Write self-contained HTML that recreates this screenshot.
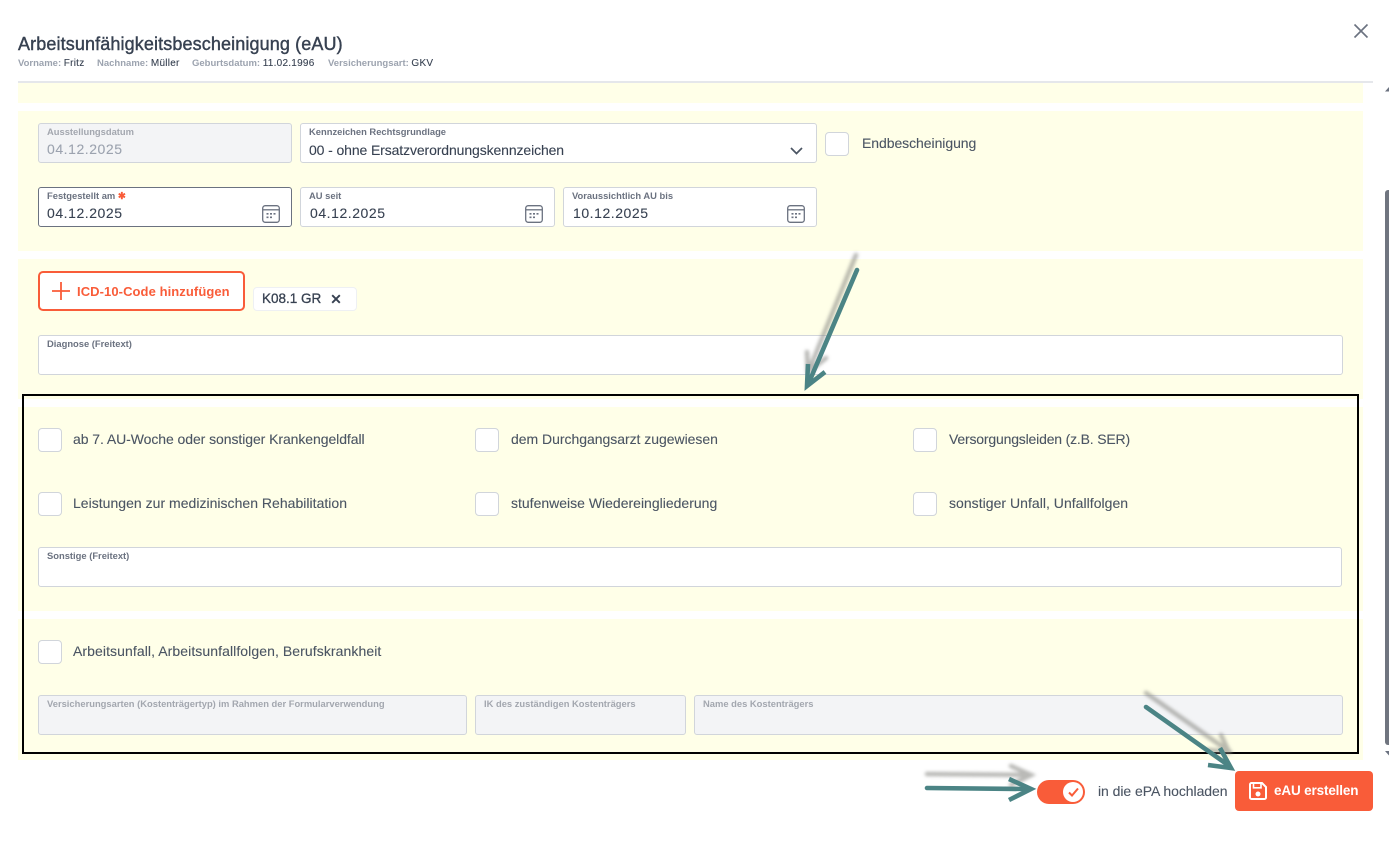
<!DOCTYPE html>
<html lang="de"><head><meta charset="utf-8"><title>eAU</title>
<style>
*{box-sizing:border-box}
html,body{margin:0;padding:0;width:1389px;height:841px;overflow:hidden;background:#fff}
body{position:relative;font-family:"Liberation Sans",sans-serif;color:#374151}
.a{position:absolute;white-space:nowrap}
.p{position:absolute;left:18px;width:1345px;background:#ffffe8}
.f{position:absolute;height:40px;background:#fff;border:1px solid #d1d5db;border-radius:3px}
.f.d{background:#f3f4f6}
.f.k{border-color:#6b7280}
.l{position:absolute;left:8px;top:2px;font-size:9.4px;font-weight:700;color:#6b7280;white-space:nowrap;line-height:11px}
.d .l{color:#a3a7af}
.v{position:absolute;left:8px;top:16px;font-size:14px;line-height:18px;color:#374151;letter-spacing:.55px;white-space:nowrap;-webkit-text-stroke:.1px currentColor}
.c{position:absolute;width:24px;height:24px;background:#fff;border:1px solid #d1d5db;border-radius:4px}
.t{position:absolute;font-size:14px;line-height:18px;color:#4b5563;white-space:nowrap;-webkit-text-stroke:.1px currentColor}
.cal{position:absolute;left:223px;top:17px}
.h{position:absolute;top:58px;font-size:9.5px;line-height:12px;font-weight:700;color:#9ca3af;white-space:nowrap}
.h span{color:#374151;font-weight:400;font-size:10px;letter-spacing:.25px;-webkit-text-stroke:.1px #374151}
</style></head><body>
<svg class="a" style="left:1353px;top:23px" width="16" height="16" viewBox="0 0 16 16"><path d="M1.5 1.5L14.5 14.5M14.5 1.5L1.5 14.5" stroke="#6b7280" stroke-width="1.6" fill="none"/></svg>
<div class="a" style="left:18px;top:33px;font-size:18px;line-height:22px;color:#374151;-webkit-text-stroke:.4px #374151;letter-spacing:.12px">Arbeitsunfähigkeitsbescheinigung (eAU)</div>
<div class="h" style="left:18px">Vorname: <span>Fritz</span></div>
<div class="h" style="left:97px">Nachname: <span>Müller</span></div>
<div class="h" style="left:192px">Geburtsdatum: <span>11.02.1996</span></div>
<div class="h" style="left:328px">Versicherungsart: <span>GKV</span></div>
<div class="a" style="left:18px;top:81px;width:1355px;height:2px;background:#e5e7eb"></div>

<div class="p" style="top:83px;height:20px"></div>
<div class="p" style="top:111px;height:140px"></div>
<div class="p" style="top:259px;height:140px"></div>
<div class="p" style="top:407px;height:204px"></div>
<div class="p" style="top:619px;height:141px"></div>

<div class="f d" style="left:38px;top:123px;width:254px"><div class="l">Ausstellungsdatum</div><div class="v" style="color:#9ca3af">04.12.2025</div></div>
<div class="f" style="left:300px;top:123px;width:517px"><div class="l">Kennzeichen Rechtsgrundlage</div><div class="v" style="top:17px;letter-spacing:-.11px">00 - ohne Ersatzverordnungskennzeichen</div>
<svg class="a" style="left:488px;top:22px" width="15" height="10" viewBox="0 0 15 10"><path d="M2 2L7.5 7.5L13 2" stroke="#4b5563" stroke-width="1.7" fill="none"/></svg></div>
<div class="c" style="left:825px;top:132px"></div>
<div class="t" style="left:862px;top:134px;letter-spacing:-.06px">Endbescheinigung</div>

<div class="f k" style="left:38px;top:187px;width:254px"><div class="l">Festgestellt am <span style="color:#f95c39">✱</span></div><div class="v">04.12.2025</div>
<svg class="cal" width="18" height="18" viewBox="0 0 18 18"><rect x=".7" y=".7" width="16.6" height="16.6" rx="2.5" fill="none" stroke="#6b7280" stroke-width="1.3"/><path d="M1 4.8H17" stroke="#6b7280" stroke-width="1.3"/><path d="M4.5 8.8h2M8 8.8h2M11.5 8.8h2M4.5 12.3h2M8 12.3h2" stroke="#6b7280" stroke-width="1.7"/></svg></div>
<div class="f" style="left:300px;top:187px;width:255px"><div class="l">AU seit</div><div class="v" style="left:9px">04.12.2025</div>
<svg class="cal" style="left:224px" width="18" height="18" viewBox="0 0 18 18"><rect x=".7" y=".7" width="16.6" height="16.6" rx="2.5" fill="none" stroke="#6b7280" stroke-width="1.3"/><path d="M1 4.8H17" stroke="#6b7280" stroke-width="1.3"/><path d="M4.5 8.8h2M8 8.8h2M11.5 8.8h2M4.5 12.3h2M8 12.3h2" stroke="#6b7280" stroke-width="1.7"/></svg></div>
<div class="f" style="left:563px;top:187px;width:254px"><div class="l">Voraussichtlich AU bis</div><div class="v" style="left:9px">10.12.2025</div>
<svg class="cal" style="left:223px" width="18" height="18" viewBox="0 0 18 18"><rect x=".7" y=".7" width="16.6" height="16.6" rx="2.5" fill="none" stroke="#6b7280" stroke-width="1.3"/><path d="M1 4.8H17" stroke="#6b7280" stroke-width="1.3"/><path d="M4.5 8.8h2M8 8.8h2M11.5 8.8h2M4.5 12.3h2M8 12.3h2" stroke="#6b7280" stroke-width="1.7"/></svg></div>

<div class="a" style="left:38px;top:271px;width:207px;height:40px;background:#fff;border:2px solid #f95c39;border-radius:5px"></div>
<svg class="a" style="left:52px;top:282px" width="18" height="18" viewBox="0 0 18 18"><path d="M0 9H18M9 0V18" stroke="#f95c39" stroke-width="1.8"/></svg>
<div class="a" style="left:77px;top:283px;font-size:13px;line-height:18px;font-weight:700;color:#f95c39;letter-spacing:.08px">ICD-10-Code hinzufügen</div>
<div class="a" style="left:253px;top:287px;width:104px;height:24px;background:#fff;border:1px solid #eef0f3;border-radius:4px"></div>
<div class="a" style="left:262px;top:290px;font-size:13.5px;line-height:18px;color:#374151;-webkit-text-stroke:.3px #374151">K08.1 GR</div>
<svg class="a" style="left:331px;top:294px" width="10" height="10" viewBox="0 0 10 10"><path d="M1.2 1.2L8.8 8.8M8.8 1.2L1.2 8.8" stroke="#374151" stroke-width="1.9"/></svg>
<div class="f" style="left:38px;top:335px;width:1305px"><div class="l">Diagnose (Freitext)</div></div>

<div class="c" style="left:38px;top:428px"></div><div class="t" style="left:73px;top:430px;letter-spacing:-.07px">ab 7. AU-Woche oder sonstiger Krankengeldfall</div>
<div class="c" style="left:475px;top:428px"></div><div class="t" style="left:511px;top:430px;letter-spacing:-.03px">dem Durchgangsarzt zugewiesen</div>
<div class="c" style="left:913px;top:428px"></div><div class="t" style="left:949px;top:430px;letter-spacing:-.18px">Versorgungsleiden (z.B. SER)</div>
<div class="c" style="left:38px;top:492px"></div><div class="t" style="left:73px;top:494px;letter-spacing:.02px">Leistungen zur medizinischen Rehabilitation</div>
<div class="c" style="left:475px;top:492px"></div><div class="t" style="left:511px;top:494px">stufenweise Wiedereingliederung</div>
<div class="c" style="left:913px;top:492px"></div><div class="t" style="left:949px;top:494px;letter-spacing:.03px">sonstiger Unfall, Unfallfolgen</div>
<div class="f" style="left:38px;top:547px;width:1304px"><div class="l">Sonstige (Freitext)</div></div>

<div class="c" style="left:38px;top:640px"></div><div class="t" style="left:73px;top:642px;letter-spacing:.08px">Arbeitsunfall, Arbeitsunfallfolgen, Berufskrankheit</div>
<div class="f d" style="left:38px;top:695px;width:429px"><div class="l">Versicherungsarten (Kostenträgertyp) im Rahmen der Formularverwendung</div></div>
<div class="f d" style="left:475px;top:695px;width:211px"><div class="l">IK des zuständigen Kostenträgers</div></div>
<div class="f d" style="left:694px;top:695px;width:649px"><div class="l">Name des Kostenträgers</div></div>

<div class="a" style="left:22px;top:394px;width:1337px;height:360px;border:2px solid #000"></div>

<div class="a" style="left:1037px;top:780px;width:48px;height:24px;border-radius:12px;background:#f95c39"></div>
<div class="a" style="left:1063px;top:782px;width:20px;height:20px;border-radius:50%;background:#fff"></div>
<svg class="a" style="left:1067px;top:786px" width="13" height="12" viewBox="0 0 13 12"><path d="M2 6.5L5 9.5L11 2.5" stroke="#f95c39" stroke-width="2" fill="none"/></svg>
<div class="a" style="left:1098px;top:782px;font-size:14px;line-height:18px;color:#4b5563;letter-spacing:-.05px;-webkit-text-stroke:.1px #4b5563">in die ePA hochladen</div>
<div class="a" style="left:1235px;top:771px;width:138px;height:40px;border-radius:4px;background:#f95c39"></div>
<svg class="a" style="left:1249px;top:782px" width="18" height="18" viewBox="0 0 18 18"><path d="M2.5 1H13L17 5V15.5A1.5 1.5 0 0 1 15.5 17H2.5A1.5 1.5 0 0 1 1 15.5V2.5A1.5 1.5 0 0 1 2.5 1Z" fill="none" stroke="#fff" stroke-width="2"/><path d="M4.5 1.5V5.8H12V1.5" fill="none" stroke="#fff" stroke-width="1.6"/><circle cx="9" cy="12" r="2.5" fill="#fff"/></svg>
<div class="a" style="left:1274px;top:782px;font-size:13.5px;line-height:18px;font-weight:700;color:#fff;letter-spacing:-.15px">eAU erstellen</div>

<div class="a" style="left:1385px;top:190px;width:4px;height:555px;background:#70757f;border-radius:3px 0 0 3px"></div>
<svg class="a" style="left:1385px;top:87px" width="4" height="5" viewBox="0 0 4 5"><path d="M0 4.5L4 0V4.5Z" fill="#6b7280"/></svg>
<svg class="a" style="left:1385px;top:751px" width="4" height="5" viewBox="0 0 4 5"><path d="M0 0H4V4.5Z" fill="#6b7280"/></svg>

<svg class="a" style="left:0;top:0;pointer-events:none" width="1389" height="841" viewBox="0 0 1389 841">
<defs><filter id="b" x="-20%" y="-20%" width="140%" height="140%"><feGaussianBlur stdDeviation="1.6"/></filter></defs>
<g fill="none" stroke="#8a8a86" stroke-opacity=".6" stroke-width="4.5" stroke-linecap="round" filter="url(#b)">
<path d="M856 255L810 368M807 352L808 372M808 372L826 358"/>
<path d="M1146 693L1230 752M1221 735L1229 752M1229 752L1208 750"/>
<path d="M927 774L1030 775M1011 766L1031 775L1011 785"/>
</g>
<g fill="none" stroke="#4b8485" stroke-width="4.6">
<path d="M857 270L810 380" stroke-linecap="round"/>
<path d="M808 364L807 386L825 372"/>
<path d="M1146 707L1228 765" stroke-linecap="round"/>
<path d="M1220 748L1231 768L1208 765"/>
<path d="M927 788L1028 789" stroke-linecap="round"/>
<path d="M1009 779L1031 789L1009 800"/>
</g>
</svg>
</body></html>
